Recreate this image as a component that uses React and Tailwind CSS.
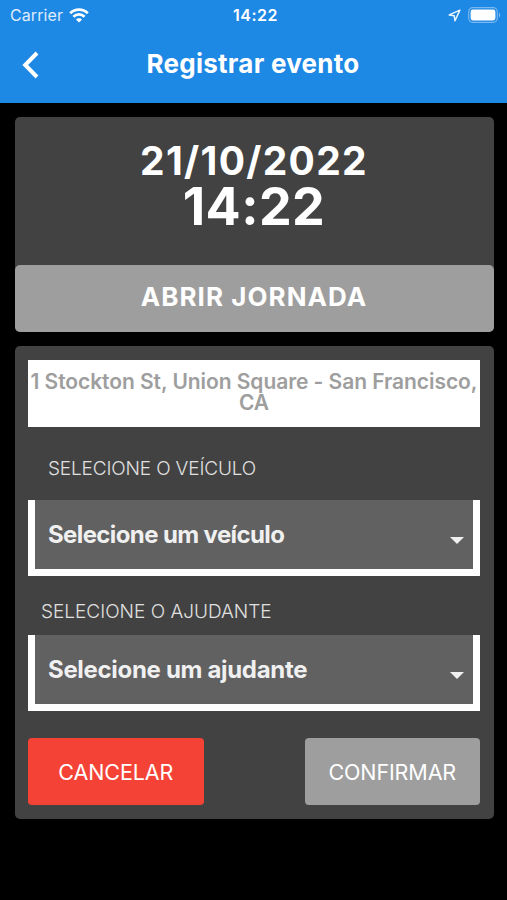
import { useState } from "react";

function StatusBar() {
  return (
    <div className="flex h-[30px] items-center text-[16px] leading-none text-white">
      <div className="flex flex-1 items-center gap-[6px] pl-[10px]">
        <span className="tracking-[0.1px] opacity-85">Carrier</span>
        <svg width="20" height="15" viewBox="0 0 20 15" fill="none">
          <path d="M1.2 5.3a12.6 12.6 0 0 1 17.6 0" stroke="#fff" strokeWidth="2.8" />
          <path d="M4.4 8.7a8 8 0 0 1 11.2 0" stroke="#fff" strokeWidth="2.6" />
          <path d="M10 14.6 6.9 11.5a4.4 4.4 0 0 1 6.2 0z" fill="#fff" />
        </svg>
      </div>
      <span className="font-semibold tracking-[0.5px]">14:22</span>
      <div className="flex flex-1 items-center justify-end gap-[7px] pr-[6px]">
        <svg width="13" height="13" viewBox="0 0 13 13" fill="none">
          <path
            d="M11.9 1.1 1.2 5.9l5 .9.8 5z"
            stroke="#fff"
            strokeOpacity="0.9"
            strokeWidth="1.5"
            strokeLinejoin="round"
          />
        </svg>
        <svg width="33" height="16" viewBox="0 0 33 16" fill="none">
          <rect x="0.7" y="0.7" width="28.6" height="14.6" rx="4.2" stroke="#fff" strokeOpacity="0.4" strokeWidth="1.2" />
          <rect x="2.6" y="2.6" width="24.8" height="10.8" rx="2.4" fill="#fff" />
          <path d="M31 5.5c1.6.7 1.6 4.3 0 5z" fill="#fff" fillOpacity="0.45" />
        </svg>
      </div>
    </div>
  );
}

function Header() {
  return (
    <header className="h-[103px] bg-[#1e88e5]">
      <StatusBar />
      <div className="flex h-[70px] items-center text-white">
        <button className="w-[60px] pl-[22px]" aria-label="Voltar">
          <svg width="18" height="28" viewBox="0 0 18 28" fill="none">
            <path d="M15 2 3.2 14 15 26" stroke="#fff" strokeWidth="4" />
          </svg>
        </button>
        <h1 className="flex-1 pr-[61px] pb-[3px] text-center text-[26px] leading-none font-bold tracking-[0.25px] whitespace-nowrap">
          Registrar evento
        </h1>
      </div>
    </header>
  );
}

function SelectBox({ placeholder, className }) {
  return (
    <button className="flex h-[76px] w-full items-center justify-between border-x-[7px] border-b-[7px] border-white bg-[#616161] pr-[9px] pl-[13px] text-left">
      <span className={`text-[24px] leading-none font-bold whitespace-nowrap text-[#f0f0f0] ${className}`}>
        {placeholder}
      </span>
      <svg className="mt-[12px]" width="14" height="7" viewBox="0 0 14 7">
        <path d="M0 0h14L7 7z" fill="#f0f0f0" />
      </svg>
    </button>
  );
}

export default function App() {
  const [now] = useState({ date: "21/10/2022", time: "14:22" });

  return (
    <div className="h-[900px] w-[507px] overflow-hidden bg-black font-['Inter',sans-serif]">
      <Header />

      <main className="pt-[14px] pr-[13.5px] pl-[14.5px]">
        {/* Date and time */}
        <section className="flex h-[215px] flex-col justify-between rounded-[5px] bg-[#424242]">
          <div className="flex flex-col items-center pt-[20px] text-white">
            <span className="text-[39px] leading-[48px] font-bold tracking-[1.3px] whitespace-nowrap">
              {now.date}
            </span>
            <span className="text-[52px] leading-[44px] font-bold tracking-[0.4px] whitespace-nowrap">
              {now.time}
            </span>
          </div>
          <button className="h-[67px] rounded-[5px] bg-[#9e9e9e] pb-[4px] text-[26px] leading-none font-bold tracking-[1.05px] whitespace-nowrap text-white">
            ABRIR JORNADA
          </button>
        </section>

        {/* Form */}
        <section className="mt-[14px] flex h-[473px] flex-col rounded-[5px] bg-[#424242] px-[13.5px] pt-[14px]">
          <p className="h-[67px] shrink-0 bg-white pt-[10.5px] text-center text-[21px] leading-[21px] font-semibold tracking-[-0.06px] text-[#9e9e9e]">
            1 Stockton St, Union Square - San Francisco, CA
          </p>

          <label className="mt-[32px] mb-[21px] pl-[20px] text-[19px] leading-[20px] font-light tracking-[-0.15px] whitespace-nowrap text-[#e0e0e0]">
            SELECIONE O VEÍCULO
          </label>
          <SelectBox placeholder="Selecione um veículo" className="tracking-[-0.62px]" />

          <label className="mt-[26px] mb-[13px] pl-[13px] text-[19px] leading-[20px] font-light whitespace-nowrap text-[#e0e0e0]">
            SELECIONE O AJUDANTE
          </label>
          <SelectBox placeholder="Selecione um ajudante" className="tracking-[-0.32px]" />

          <div className="mt-[27px] flex justify-between text-[21.5px] leading-none tracking-[-0.12px] text-white">
            <button className="h-[67px] w-[175.5px] rounded-[4px] bg-[#f44336] pt-[2px]">CANCELAR</button>
            <button className="h-[67px] w-[175.5px] rounded-[4px] bg-[#9e9e9e] pt-[2px]">CONFIRMAR</button>
          </div>
        </section>
      </main>
    </div>
  );
}
